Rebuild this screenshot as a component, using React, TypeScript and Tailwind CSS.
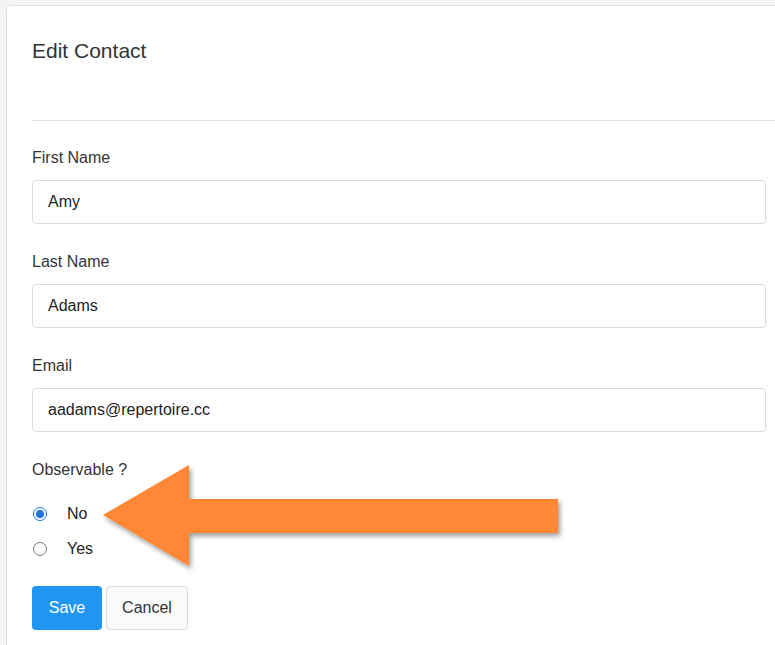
import React from 'react'

const font = { fontFamily: '"Liberation Sans", Arial, sans-serif' }

function Field({label, value}: {label: string, value: string}) {
	return (
		<div className="flex flex-col">
			<label className="text-[16px] leading-5 text-[#333]">{label}</label>
			<div className="mt-[12px] h-[44px] w-[734px] border border-[#dcdcdc] rounded-[4px] px-[15px] flex items-center text-[16px] text-[#222]">
				{value}
			</div>
		</div>
	)
}

function Radio({checked, label}: {checked: boolean, label: string}) {
	return (
		<div className="flex items-center h-[20px]">
			<span className={checked
				? 'ml-[1px] w-[14px] h-[14px] rounded-full border-[1.5px] border-[#1a73e8] flex items-center justify-center'
				: 'ml-[1px] w-[14px] h-[14px] rounded-full border border-[#767676]'}>
				{checked && <span className="w-[8px] h-[8px] rounded-full bg-[#1a73e8]"/>}
			</span>
			<span className="ml-[20px] text-[16px] text-[#222]">{label}</span>
		</div>
	)
}

export default function App() {
	return (
		<div style={font} className="relative h-[645px] w-[775px] overflow-hidden bg-[#f4f4f4]">
			<div className="ml-[6px] mt-[5px] w-[800px] h-[700px] bg-white border border-[#e0e0e0] rounded-tl-[4px] pl-[25px]">
				<h1 className="pt-[31px] text-[21px] leading-7 text-[#333]">Edit Contact</h1>
				<div className="mt-[55px] h-px w-[780px] bg-[#e3e3e3]"/>

				<div className="mt-[27px] flex flex-col gap-[28px]">
					<Field label="First Name" value="Amy"/>
					<Field label="Last Name" value="Adams"/>
					<Field label="Email" value="aadams@repertoire.cc"/>
				</div>

				<div className="mt-[28px] text-[16px] leading-5 text-[#333]">Observable ?</div>
				<div className="mt-[24px] flex flex-col gap-[15px]">
					<Radio checked={true} label="No"/>
					<Radio checked={false} label="Yes"/>
				</div>

				<div className="mt-[27px] flex gap-[4px]">
					<button className="h-[44px] w-[70px] rounded-[4px] bg-[#2196f3] text-white text-[16px]">Save</button>
					<button className="h-[44px] w-[82px] rounded-[4px] bg-[#fafafa] border border-[#dcdcdc] text-[#333] text-[16px]">Cancel</button>
				</div>
			</div>

			<svg className="absolute left-0 top-0 pointer-events-none" width="775" height="645">
				<defs>
					<filter id="sh" x="-10%" y="-20%" width="130%" height="150%">
						<feDropShadow dx="2" dy="3" stdDeviation="2.5" floodColor="#000" floodOpacity="0.4"/>
					</filter>
				</defs>
				<polygon
					points="103,515 189,465 189,499 558,499 558,533 189,533 189,566"
					fill="#fe8834"
					filter="url(#sh)"
				/>
			</svg>
		</div>
	)
}
